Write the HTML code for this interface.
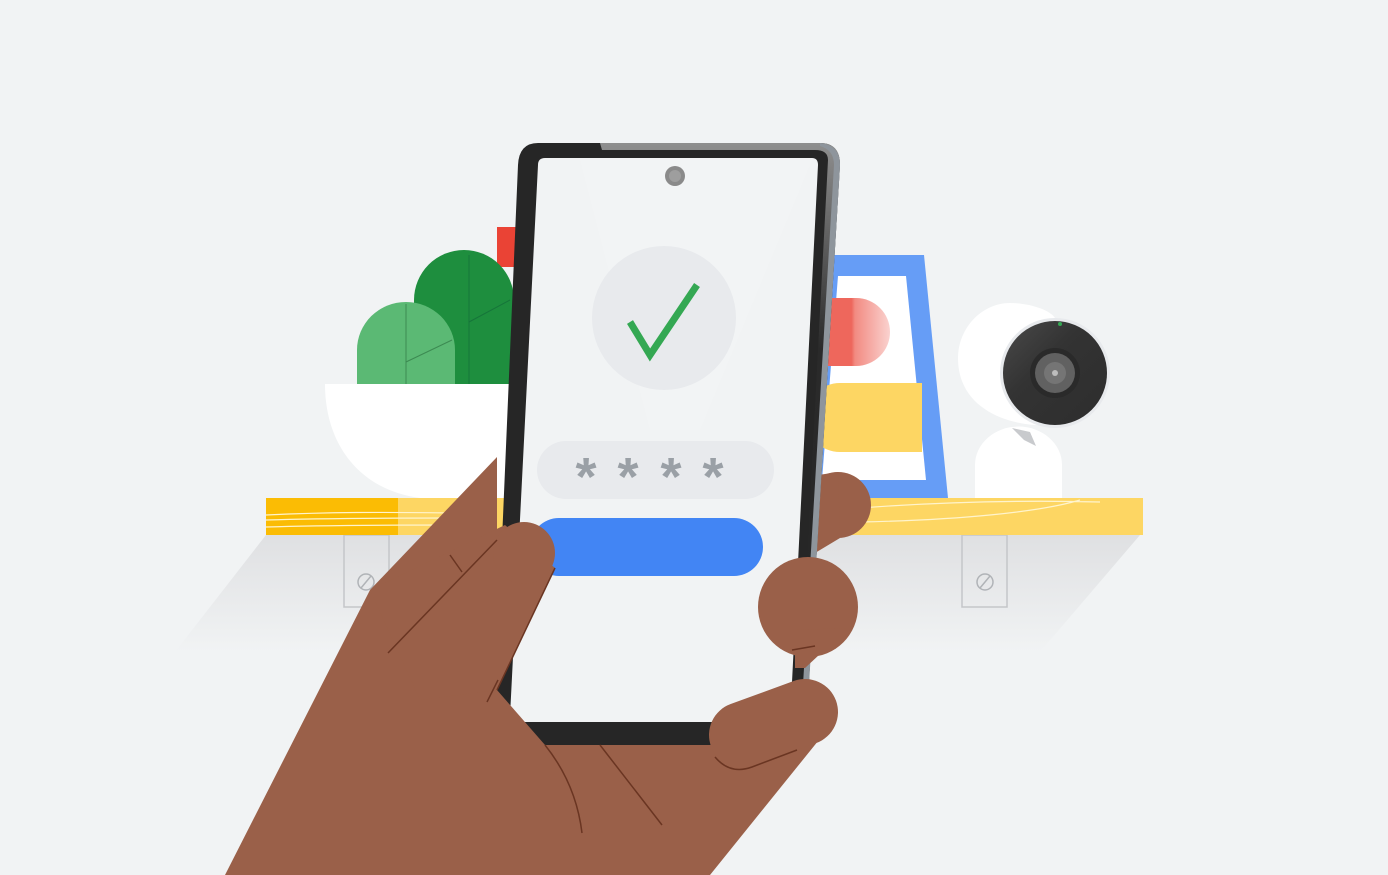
<!DOCTYPE html>
<html><head><meta charset="utf-8"><style>html,body{margin:0;padding:0;background:#f1f3f4;overflow:hidden}svg{display:block}</style></head>
<body>
<svg width="1388" height="875" viewBox="0 0 1388 875" xmlns="http://www.w3.org/2000/svg">
<defs>
<linearGradient id="sh" x1="0" y1="0" x2="0" y2="1"><stop offset="0" stop-color="#dfe0e2"/><stop offset="1" stop-color="#f1f3f4"/></linearGradient>
<linearGradient id="edge" x1="0" y1="0" x2="0" y2="1"><stop offset="0" stop-color="#9a9a9a"/><stop offset="0.35" stop-color="#2b2b2b"/><stop offset="1" stop-color="#232323"/></linearGradient>
<linearGradient id="pill" x1="0" y1="0" x2="1" y2="0"><stop offset="0.45" stop-color="#ee675c"/><stop offset="0.5" stop-color="#f28b82"/><stop offset="1" stop-color="#fad2cf"/></linearGradient>
<linearGradient id="lens" x1="0" y1="0" x2="1" y2="1"><stop offset="0" stop-color="#4a4a4a"/><stop offset="0.4" stop-color="#333"/><stop offset="1" stop-color="#2d2d2d"/></linearGradient>
</defs>
<rect width="1388" height="875" fill="#f1f3f4"/>
<polygon points="266,535 1140,535 1040,652 175,652" fill="url(#sh)"/>
<rect x="344" y="535" width="45" height="72" fill="none" stroke="#c4c6c9" stroke-width="1.5"/>
<circle cx="366" cy="582" r="8" fill="none" stroke="#b0b3b7" stroke-width="1.5"/><line x1="361" y1="588" x2="371" y2="576" stroke="#b0b3b7" stroke-width="1.5"/>
<rect x="962" y="535" width="45" height="72" fill="none" stroke="#c4c6c9" stroke-width="1.5"/>
<circle cx="985" cy="582" r="8" fill="none" stroke="#b0b3b7" stroke-width="1.5"/><line x1="980" y1="588" x2="990" y2="576" stroke="#b0b3b7" stroke-width="1.5"/>
<rect x="497" y="227" width="20" height="40" fill="#ea4335"/>
<path d="M414,384 V300 A50,50 0 0 1 514,300 V384 Z" fill="#1e8e3e"/>
<path d="M357,384 V350 A49,48 0 0 1 455,350 V384 Z" fill="#5bb974"/>
<line x1="406" y1="304" x2="406" y2="384" stroke="#3c8a52" stroke-width="1"/>
<line x1="406" y1="362" x2="452" y2="340" stroke="#3c8a52" stroke-width="1"/>
<line x1="469" y1="255" x2="469" y2="384" stroke="#16753a" stroke-width="1"/>
<line x1="469" y1="322" x2="510" y2="300" stroke="#16753a" stroke-width="1"/>
<path d="M325,384 H510 V498 H420 C360,490 325,445 325,384 Z" fill="#ffffff"/>
<polygon points="832,255 924,255 948,498 815,498" fill="#669df6"/>
<polygon points="838,276 906,276 926,480 822,480" fill="#ffffff"/>
<path d="M820,298 H856 A34,34 0 0 1 856,366 H820 Z" fill="url(#pill)"/>
<path d="M840,383 H922 V452 H840 A34,34 0 0 1 840,383 Z" fill="#fdd663"/>
<path d="M975,498 V465 A43,38 0 0 1 1062,465 V498 Z" fill="#ffffff"/>
<path d="M1010,303 C1030,303 1050,310 1055,318 L1040,425 C1010,425 958,410 958,358 C958,328 982,303 1010,303 Z" fill="#ffffff"/>
<path d="M1012,428 L1030,432 L1036,446 L1024,440 Z" fill="#c8cacd"/>
<circle cx="1055" cy="373" r="55" fill="#e8eaed"/>
<circle cx="1055" cy="373" r="52" fill="url(#lens)"/>
<circle cx="1055" cy="373" r="25" fill="#2a2a2a"/>
<circle cx="1055" cy="373" r="20" fill="#616161"/>
<circle cx="1055" cy="373" r="11" fill="#757575"/>
<circle cx="1055" cy="373" r="3" fill="#bdbdbd"/>
<circle cx="1060" cy="324" r="2" fill="#34a853"/>
<rect x="266" y="498" width="877" height="37" fill="#fdd663"/>
<rect x="266" y="498" width="132" height="37" fill="#fbbc04"/>
<path d="M266,515 C330,512 380,512 460,513 M266,520 C330,518 400,518 460,518 M266,527 C330,525 400,525 460,525" stroke="#fff4cc" stroke-width="1.2" fill="none"/>
<path d="M860,508 C940,502 1020,500 1100,502 M860,522 C960,520 1040,512 1080,500" stroke="#fff4cc" stroke-width="1.2" fill="none"/>
<circle cx="838" cy="505" r="33" fill="#9a6049"/>
<polygon points="812,476 838,472 840,538 810,556" fill="#9a6049"/>
<path d="M538,143 H820 Q840,143 840,165 L806,730 Q805,745 790,745 H510 Q493,745 494,728 L518,165 Q519,143 538,143 Z" fill="#262626"/>
<path d="M600,143 H820 Q840,143 840,165 L806,730 L798,730 L828,160 Q828,150 815,150 H602 Z" fill="url(#edge)" opacity="0.9"/>
<path d="M820,143 Q840,145 840,165 L806,735 L800,735 L834,165 Q834,150 820,146 Z" fill="#8e959c"/>
<path d="M545,158 H812 Q818,158 818,165 L790,722 H515 Q510,722 510,716 L538,165 Q538,158 545,158 Z" fill="#f1f3f4"/>
<polygon points="580,160 812,160 700,430 650,430" fill="#f5f6f7" opacity="0.4"/>
<circle cx="675" cy="176" r="10" fill="#8a8a8a"/>
<circle cx="675" cy="176" r="6" fill="#9e9e9e"/>
<circle cx="664" cy="318" r="72" fill="#e8eaed"/>
<polyline points="630,322 650,355 697,285" fill="none" stroke="#34a853" stroke-width="7"/>
<rect x="537" y="441" width="237" height="58" rx="29" fill="#e8eaed"/>
<g fill="#9aa0a6" font-family="Liberation Sans, sans-serif" font-size="54" font-weight="bold" text-anchor="middle">
<text x="586" y="495">*</text><text x="628" y="495">*</text><text x="671" y="495">*</text><text x="713" y="495">*</text>
</g>
<rect x="530" y="518" width="233" height="58" rx="29" fill="#4285f4"/>
<g fill="#9a6049">
<polygon points="225,875 370,590 497,457 497,690 545,745 710,745 835,720 710,875"/>
<polygon points="370,590 505,525 555,568 497,690 420,700"/>
<circle cx="524" cy="553" r="31"/>
<circle cx="808" cy="607" r="50"/>
<polygon points="795,630 848,628 805,668 795,668"/>
<line x1="742" y1="735" x2="805" y2="712" stroke="#9a6049" stroke-width="66" stroke-linecap="round"/>
</g>
<g stroke="#6a3522" stroke-width="1.5" fill="none">
<path d="M388,653 L497,540"/>
<path d="M450,555 L462,572"/>
<path d="M487,702 L498,680"/>
<path d="M555,568 L497,690"/>
<path d="M600,745 L662,825"/>
<path d="M545,745 C565,770 578,800 582,833"/>
<path d="M715,757 Q730,775 752,767 L797,750"/>
<path d="M792,650 L815,646"/>
</g>
</svg>
</body></html>
